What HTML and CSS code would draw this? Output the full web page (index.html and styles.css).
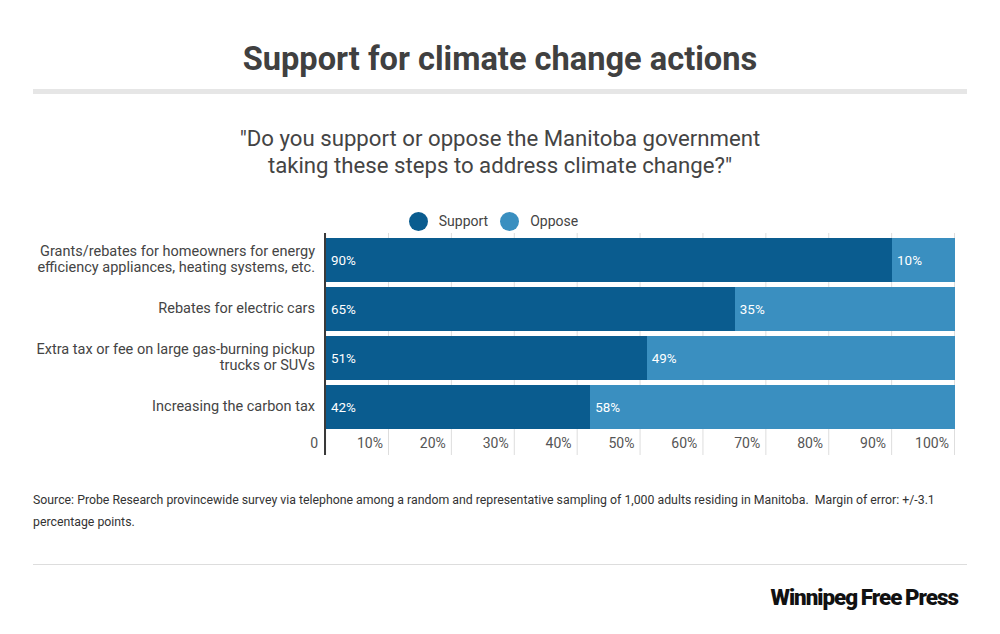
FILE: index.html
```html
<!DOCTYPE html>
<html lang="en">
<head>
<meta charset="utf-8">
<title>Support for climate change actions</title>
<link rel="stylesheet" href="styles.css">
</head>
<body>
<div class="page">
  <h1 class="title">Support for climate change actions</h1>
  <div class="rule-thick"></div>
  <p class="subtitle">"Do you support or oppose the Manitoba government<br>taking these steps to address climate change?"</p>

  <div class="legend">
    <span class="legend-item"><span class="dot dot-support"></span>Support</span>
    <span class="legend-item"><span class="dot dot-oppose"></span>Oppose</span>
  </div>

  <div class="chart">
    <div class="labels">
      <div class="cat">Grants/rebates for homeowners for energy<br>efficiency appliances, heating systems, etc.</div>
      <div class="cat">Rebates for electric cars</div>
      <div class="cat">Extra tax or fee on large gas-burning pickup<br>trucks or SUVs</div>
      <div class="cat">Increasing the carbon tax</div>
      <div class="zero">0</div>
    </div>
    <div class="plot">
      <div class="bar">
        <div class="seg support" style="width:90%">90%</div>
        <div class="seg oppose" style="width:10%">10%</div>
      </div>
      <div class="bar">
        <div class="seg support" style="width:65%">65%</div>
        <div class="seg oppose" style="width:35%">35%</div>
      </div>
      <div class="bar">
        <div class="seg support" style="width:51%">51%</div>
        <div class="seg oppose" style="width:49%">49%</div>
      </div>
      <div class="bar">
        <div class="seg support" style="width:42%">42%</div>
        <div class="seg oppose" style="width:58%">58%</div>
      </div>
      <div class="ticks">
        <span>10%</span><span>20%</span><span>30%</span><span>40%</span><span>50%</span>
        <span>60%</span><span>70%</span><span>80%</span><span>90%</span><span>100%</span>
      </div>
    </div>
  </div>

  <p class="source">Source: Probe Research provincewide survey via telephone among a random and representative sampling of 1,000 adults residing in Manitoba.&nbsp; Margin of error: +/-3.1 percentage points.</p>
  <div class="rule-thin"></div>
  <div class="brand"><span class="logo">Winnipeg Free Press</span></div>
</div>
</body>
</html>
```
FILE: styles.css
```css
html, body {
  margin: 0;
  padding: 0;
  background: #ffffff;
}
body {
  font-family: Roboto, "Liberation Sans", sans-serif;
  color: #444444;
  width: 1000px;
  height: 634px;
  overflow: hidden;
}
.page {
  padding: 40px 33px 0 33px;
}
.title {
  margin: 0;
  font-size: 32.6px;
  line-height: 38px;
  font-weight: 700;
  text-align: center;
  color: #404040;
}
.rule-thick {
  margin-top: 11px;
  height: 5px;
  background: #e6e6e6;
}
.subtitle {
  margin: 31px 0 0 0;
  font-size: 22.2px;
  line-height: 27px;
  text-align: center;
  color: #444444;
}
.legend {
  margin: 32px 0 0 0;
  height: 20px;
  display: flex;
  justify-content: center;
  gap: 12px;
  padding-right: 13px;
  font-size: 14px;
  color: #444444;
}
.legend-item {
  display: flex;
  align-items: center;
  gap: 11px;
}
.dot {
  width: 19px;
  height: 19px;
  border-radius: 50%;
}
.dot-support { background: #0a5c8f; }
.dot-oppose { background: #3a8fc0; }

.chart {
  margin: 2px 0 0 -33px;
  display: grid;
  grid-template-columns: 324px 631px;
}
.labels {
  padding-top: 5px;
  display: flex;
  flex-direction: column;
  gap: 5px;
}
.cat, .zero {
  height: 44px;
  display: flex;
  align-items: center;
  justify-content: flex-end;
  text-align: right;
  padding-right: 9px;
  font-size: 14.5px;
  line-height: 16px;
  color: #444444;
}
.zero {
  height: 24px;
  margin-top: -3px;
  padding-right: 6px;
  font-size: 14px;
  color: #555555;
}
.plot {
  border-left: 2px solid #3a3a3a;
  padding-top: 5px;
  display: flex;
  flex-direction: column;
  gap: 5px;
  background-image: linear-gradient(to right, #dddddd 1px, transparent 1px);
  background-size: 62.9px 100%;
  background-position: 62px 0;
  background-repeat: repeat-x;
  width: 629px;
}
.bar {
  height: 44px;
  display: flex;
}
.seg {
  height: 100%;
  display: flex;
  align-items: center;
  padding-left: 5px;
  box-sizing: border-box;
  font-size: 13.4px;
  color: #ffffff;
}
.support { background: #0a5c8f; }
.oppose { background: #3a8fc0; }
.ticks {
  height: 24px;
  margin-top: -3px;
  display: flex;
}
.ticks span {
  width: 10%;
  display: flex;
  align-items: center;
  justify-content: flex-end;
  padding-right: 6px;
  box-sizing: border-box;
  font-size: 14px;
  color: #555555;
}
.source {
  margin: 34px 0 0 0;
  font-size: 12.3px;
  line-height: 22px;
  color: #333333;
}
.rule-thin {
  margin-top: 31px;
  height: 1px;
  background: #dddddd;
}
.brand {
  margin-top: 19px;
  display: flex;
  justify-content: flex-end;
  padding-right: 9px;
}
.logo {
  font-family: Roboto, "Liberation Sans", sans-serif;
  font-weight: 900;
  font-size: 22.4px;
  line-height: 26px;
  letter-spacing: -1px;
  word-spacing: -1px;
  color: #111111;
}
```
